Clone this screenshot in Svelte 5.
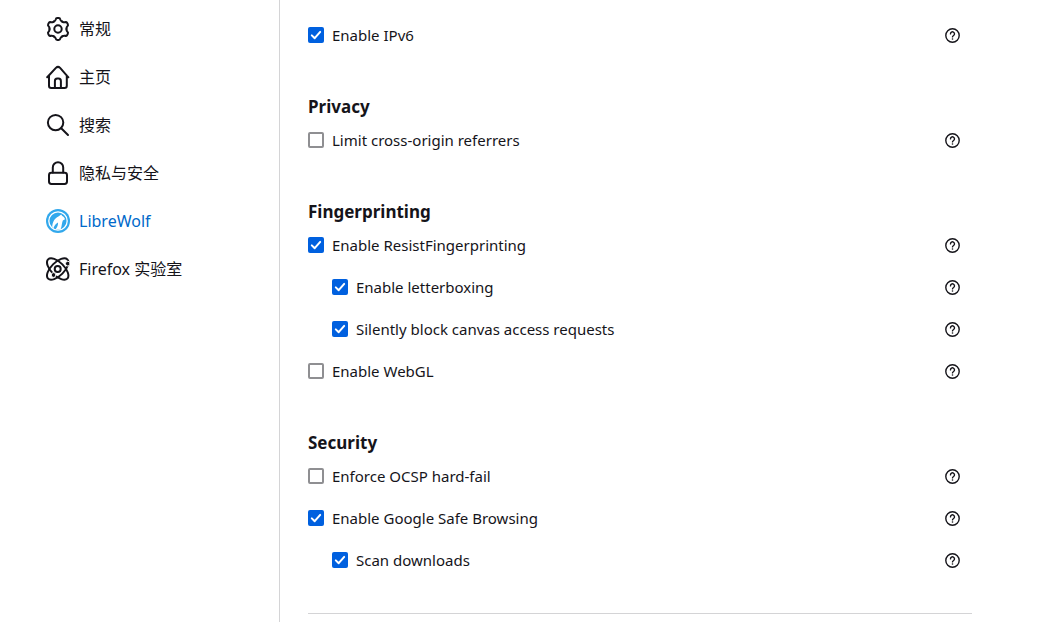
<script>
  const nav = [
    { icon: 'gear', label: '常规' },
    { icon: 'home', label: '主页' },
    { icon: 'search', label: '搜索' },
    { icon: 'lock', label: '隐私与安全' },
    { icon: 'wolf', label: 'LibreWolf', active: true },
    { icon: 'atom', label: 'Firefox 实验室' },
  ];

  const groups = [
    { title: '', rows: [{ id: 'ipv6', label: 'Enable IPv6', on: true }] },
    { title: 'Privacy', rows: [{ id: 'referrers', label: 'Limit cross-origin referrers', on: false }] },
    {
      title: 'Fingerprinting',
      rows: [
        { id: 'rfp', label: 'Enable ResistFingerprinting', on: true },
        { id: 'letterboxing', label: 'Enable letterboxing', on: true, sub: true },
        { id: 'canvas', label: 'Silently block canvas access requests', on: true, sub: true },
        { id: 'webgl', label: 'Enable WebGL', on: false },
      ],
    },
    {
      title: 'Security',
      rows: [
        { id: 'ocsp', label: 'Enforce OCSP hard-fail', on: false },
        { id: 'safebrowsing', label: 'Enable Google Safe Browsing', on: true },
        { id: 'downloads', label: 'Scan downloads', on: true, sub: true },
      ],
    },
  ];
</script>

<div class="page">
  <nav>
    {#each nav as item}
      <a href="#{item.icon}" class:active={item.active}>
        <svg viewBox="0 0 24 24" aria-hidden="true">
          {#if item.icon === 'gear'}
            {#each [0, 60, 120, 180, 240, 300] as angle}
              <path
                transform="rotate({angle} 12 12)"
                d="M7.75 4.64C8.7 4.1 9.2 4 9.6 2.7Q10 1.1 11.2 1.1H12.8Q14 1.1 14.4 2.7C14.8 4 15.3 4.1 16.25 4.64"
              />
            {/each}
            <circle cx="12" cy="12" r="3.7" />
          {:else if item.icon === 'home'}
            <path d="M1.2 12.3 9.9 2.9Q12 .9 14.1 2.9L22.4 12.3M3 10.6V20.8Q3 23 5.2 23H18.6Q20.8 23 20.8 20.8V10.6M8.9 22.8V16.2Q8.9 13.6 11.2 13.6H12.6Q14.9 13.6 14.9 16.2V22.8" />
          {:else if item.icon === 'search'}
            <circle cx="9.6" cy="9.6" r="7.7" />
            <path d="M15.2 15.2 22 22" />
          {:else if item.icon === 'lock'}
            <rect x="3" y="11.8" width="18" height="11.2" rx="2.4" />
            <path d="M6.8 11.6V6.4A5.2 5.2 0 0 1 17.2 6.4V11.6" />
          {:else if item.icon === 'wolf'}
            <circle cx="12" cy="12" r="12" fill="#32a8ec" stroke="none" />
            <circle cx="12" cy="12" r="9.2" fill="none" stroke="#fff" stroke-width="1.3" />
            <path
              d="M6.2 18C6.4 13.2 8.6 9.4 12.4 7.6L15.2 5.6 16.2 7C17.6 7.7 18.4 8.6 19 10.2L16.8 11.4C15.8 13.8 16 17 14.6 20.2L9.4 20.4C11.4 18 12.2 15.6 12 13.4 10 14.6 8.2 16.4 7.4 19.2Z"
              fill="#fff" stroke="none"
            />
          {:else}
            <ellipse cx="11.7" cy="12" rx="13.6" ry="6.6" transform="rotate(45 11.7 12)" />
            <ellipse cx="11.7" cy="12" rx="13.6" ry="6.6" transform="rotate(-45 11.7 12)" />
            <circle cx="11.7" cy="12" r="3" />
            <circle class="dot" cx="21.8" cy="6.6" r="2.4" />
            <circle class="dot" cx="7.6" cy="18" r="2.4" />
          {/if}
        </svg>
        <span>{item.label}</span>
      </a>
    {/each}
  </nav>

  <main>
    <div class="content">
      {#each groups as group}
        <section>
          {#if group.title}<h2>{group.title}</h2>{/if}
          {#each group.rows as row}
            <div class="row" class:sub={row.sub}>
              <input type="checkbox" id={row.id} bind:checked={row.on} />
              <label for={row.id}>{row.label}</label>
              <button type="button" aria-label="Help">
                <svg viewBox="0 0 15 15" aria-hidden="true">
                  <circle cx="7.5" cy="7.5" r="6.7" />
                  <path d="M5.5 5.9A2 2 0 1 1 8.6 7.5Q7.5 8.2 7.5 8.9" />
                  <circle class="point" cx="7.5" cy="11" r=".8" />
                </svg>
              </button>
            </div>
          {/each}
        </section>
      {/each}
      <hr />
    </div>
  </main>
</div>

<style>
  :global(body) {
    margin: 0;
    background: #fff;
  }

  .page {
    display: flex;
    min-height: 100vh;
    color: #15141a;
    font-family: 'Noto Sans', 'Noto Sans CJK SC', sans-serif;
    font-size: 15px;
  }

  nav {
    box-sizing: border-box;
    flex: 0 0 280px;
    padding: 5px 0 0 46px;
    border-right: 1px solid #d4d4d6;
  }

  nav a {
    display: flex;
    align-items: center;
    gap: 9px;
    height: 48px;
    color: inherit;
    font-size: 16px;
    line-height: 24px;
    text-decoration: none;
  }

  nav a.active {
    color: #0069ca;
  }

  svg {
    fill: none;
    stroke: currentColor;
    stroke-linecap: round;
    stroke-linejoin: round;
  }

  nav svg {
    width: 24px;
    height: 24px;
    stroke-width: 2;
  }

  .dot {
    fill: currentColor;
    stroke: #fff;
    stroke-width: 1;
  }

  .point {
    fill: currentColor;
    stroke: none;
  }

  main {
    flex: 1;
    padding: 14px 28px 0;
  }

  .content {
    max-width: 664px;
  }

  section {
    margin-bottom: 38px;
  }

  section:last-of-type {
    margin-bottom: 32px;
  }

  h2 {
    margin: 0;
    font-size: 17px;
    font-weight: 700;
    line-height: 25px;
  }

  .row {
    display: flex;
    align-items: center;
    gap: 8px;
    height: 42px;
    padding-right: 12px;
  }

  .row.sub {
    padding-left: 24px;
  }

  label {
    flex: 1;
    line-height: 24px;
  }

  input {
    box-sizing: border-box;
    flex: none;
    width: 16px;
    height: 16px;
    margin: 0;
    appearance: none;
    border: 2px solid #8f8f92;
    border-radius: 2px;
    background: #fff;
  }

  input:checked {
    border: 0;
    background: #0060df
      url("data:image/svg+xml,%3Csvg xmlns='http://www.w3.org/2000/svg' viewBox='0 0 16 16'%3E%3Cpath d='M3.8 8.4 6.7 11.2 12.2 4.9' fill='none' stroke='white' stroke-width='2' stroke-linecap='round' stroke-linejoin='round'/%3E%3C/svg%3E");
  }

  button {
    display: flex;
    padding: 0;
    border: 0;
    background: none;
    color: inherit;
  }

  button svg {
    width: 15px;
    height: 15px;
    stroke-width: 1.4;
  }

  hr {
    margin: 0;
    border: 0;
    border-top: 1px solid #d4d4d6;
  }
</style>
